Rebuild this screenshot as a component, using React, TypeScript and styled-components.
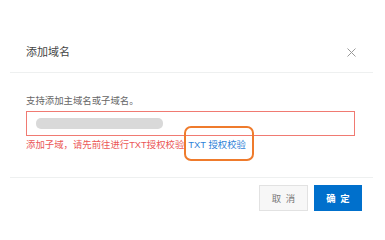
import styled, { createGlobalStyle } from "styled-components";

const GlobalStyle = createGlobalStyle`
  html, body {
    margin: 0;
    padding: 0;
    background: #fff;
  }
  body {
    font-family: "Liberation Sans", "Noto Sans CJK SC", sans-serif;
    color: #333;
  }
`;

const Dialog = styled.div`
  width: 363px;
  margin-left: 10px;
`;
const Header = styled.div`
  display: flex;
  align-items: center;
  justify-content: space-between;
  padding: 45px 17px 13px 16px;
  border-bottom: 1px solid #eef0f0;
`;
const Title = styled.span`
  font-size: 11px;
  line-height: 14px;
  color: #444;
`;
const CloseButton = styled.button`
  display: flex;
  padding: 0;
  border: 0;
  background: none;
  cursor: pointer;
`;
const Body = styled.div`
  padding: 21px 18px 25px 16px;
  border-bottom: 1px solid #eef0f0;
`;
const Label = styled.div`
  font-size: 9.4px;
  line-height: 14px;
  color: #666;
  margin-bottom: 3px;
`;
const InputBox = styled.div`
  display: flex;
  align-items: center;
  height: 25px;
  box-sizing: border-box;
  padding-left: 9px;
  border: 1px solid #f07a72;
`;
const Redacted = styled.span`
  width: 127px;
  height: 11px;
  border-radius: 5px;
  background: #d9d9d9;
`;
const ErrorRow = styled.div`
  margin-top: 2px;
  font-size: 9.4px;
  line-height: 14px;
  color: #eb5656;
  white-space: nowrap;
`;
const Link = styled.a`
  position: relative;
  margin-left: 4px;
  color: #2f83d8;
  text-decoration: none;
  cursor: pointer;
`;
const Highlight = styled.span`
  position: absolute;
  left: -4px;
  top: -13px;
  width: 70px;
  height: 35px;
  box-sizing: border-box;
  border: 2.5px solid #ef7b2c;
  border-radius: 7px;
  pointer-events: none;
`;
const Footer = styled.div`
  display: flex;
  justify-content: flex-end;
  gap: 6px;
  padding: 7px 11px 0 0;
`;
const Button = styled.button<{ $primary?: boolean }>`
  width: ${(p) => (p.$primary ? "48px" : "49px")};
  height: 26px;
  padding: 0 0 0 1px;
  font-family: inherit;
  font-size: 9.4px;
  letter-spacing: 1px;
  font-weight: ${(p) => (p.$primary ? 700 : 400)};
  color: ${(p) => (p.$primary ? "#fff" : "#777")};
  background: ${(p) => (p.$primary ? "#0070cc" : "#f7f7f7")};
  border: 1px solid ${(p) => (p.$primary ? "#0070cc" : "#e2e2e2")};
  cursor: pointer;
`;

export default function App() {
  return (
    <>
      <GlobalStyle />
      <Dialog>
        <Header>
          <Title>添加域名</Title>
          <CloseButton aria-label="close">
            <svg width="9" height="9" viewBox="0 0 9 9">
              <path d="M0.5 0.5L8.5 8.5M8.5 0.5L0.5 8.5" stroke="#999" strokeWidth="1" />
            </svg>
          </CloseButton>
        </Header>
        <Body>
          <Label>支持添加主域名或子域名。</Label>
          <InputBox>
            <Redacted />
          </InputBox>
          <ErrorRow>
            添加子域，请先前往进行TXT授权校验
            <Link>
              TXT 授权校验
              <Highlight />
            </Link>
          </ErrorRow>
        </Body>
        <Footer>
          <Button>取 消</Button>
          <Button $primary>确 定</Button>
        </Footer>
      </Dialog>
    </>
  );
}
